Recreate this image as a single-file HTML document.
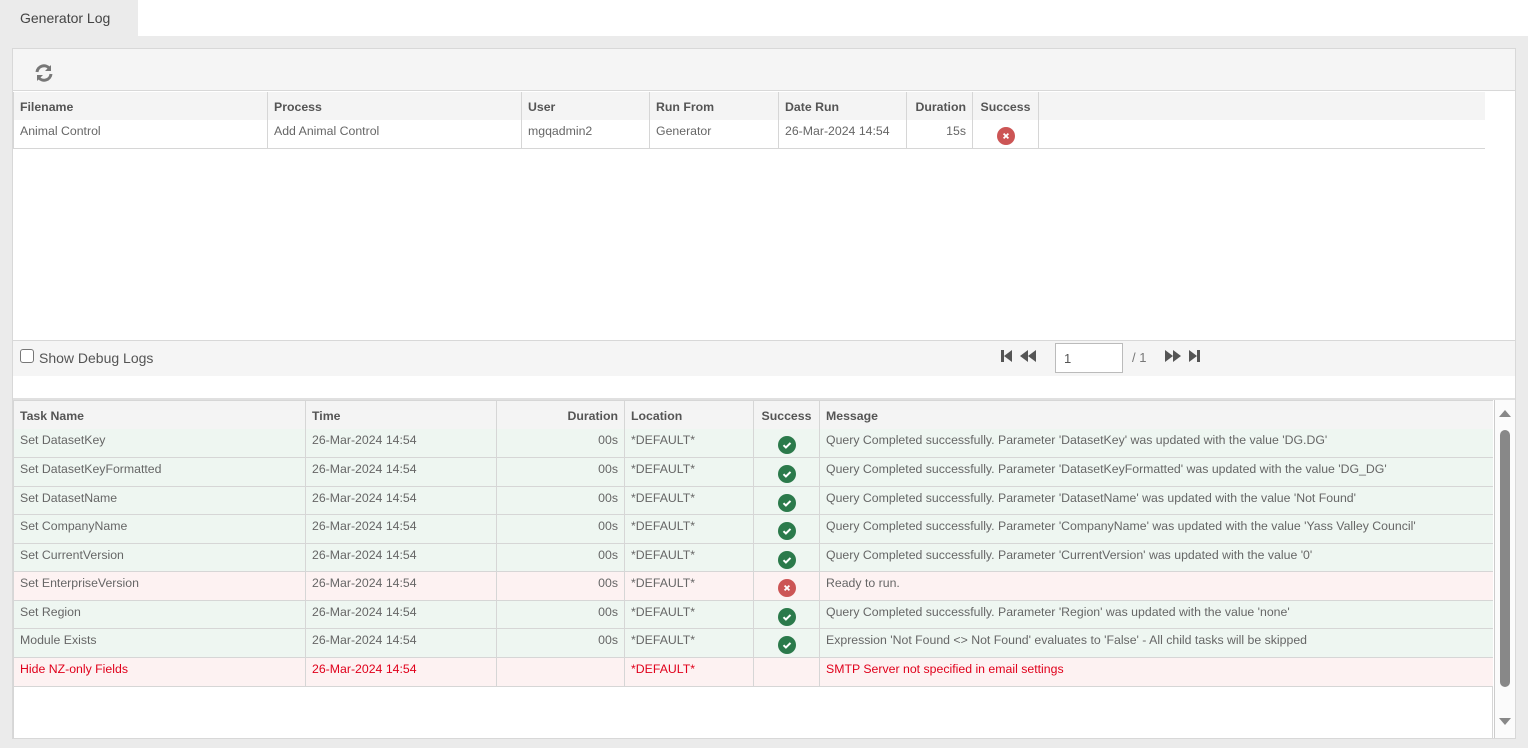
<!DOCTYPE html>
<html><head><meta charset="utf-8"><style>
*{box-sizing:border-box;margin:0;padding:0}
body{width:1528px;height:748px;background:#ebebeb;font-family:"Liberation Sans",sans-serif;font-size:12.3px;color:#666;position:relative;overflow:hidden}
.abs{position:absolute}
table{border-collapse:collapse;table-layout:fixed;position:absolute}
td,th{text-align:left;padding:0 6px;white-space:nowrap;overflow:hidden;border-left:1px solid #d6d6d6}
th{font-weight:bold;color:#555;background:#f4f4f4;height:28px;padding-top:2px}
td{border-top:1px solid #d6d6d6;padding-bottom:5px}
.g td{background:#eef6f1}
.r td{background:#fdf2f2}
.rr td{background:#fdf2f2;color:#e0001b}
.ok,.bad{display:inline-block;width:18px;height:18px;vertical-align:middle;position:relative;top:5px}
.num{text-align:right}
.c{text-align:center}
</style></head><body>
<svg width="0" height="0" style="position:absolute"><defs>
<symbol id="ok" viewBox="0 0 18 18"><circle cx="9" cy="9" r="9" fill="#2b7a4b"/><path d="M5.5 9.2l2.4 2.3 4.6-4.6" stroke="#fff" stroke-width="2" fill="none"/></symbol>
<symbol id="bad" viewBox="0 0 18 18"><circle cx="9" cy="9" r="9" fill="#cc5555"/><path d="M6.6 6.6l4.8 4.8M11.4 6.6l-4.8 4.8" stroke="#fff" stroke-width="1.8"/></symbol>
</defs></svg>
<div class="abs" style="left:138px;top:0;width:1390px;height:36px;background:#fff"></div>
<div class="abs" style="left:20px;top:10px;font-size:14px;color:#444">Generator Log</div>
<div class="abs" style="left:12px;top:48px;width:1504px;height:691px;background:#fff;border:1px solid #d8d8d8"></div>
<div class="abs" style="left:13px;top:49px;width:1502px;height:42px;background:#f5f5f5;border-bottom:1px solid #d8d8d8"></div>
<svg class="abs" style="left:34px;top:63px" width="20" height="20" viewBox="0 0 20 20"><path d="M3 9a7 7 0 0 1 12.5-3.5" stroke="#777" stroke-width="3" fill="none"/><path d="M17 2v6h-6z" fill="#777"/><path d="M17 11a7 7 0 0 1-12.5 3.5" stroke="#777" stroke-width="3" fill="none"/><path d="M3 18v-6h6z" fill="#777"/></svg>
<table style="left:13px;top:92px;width:1472px">
<colgroup><col style="width:254px"><col style="width:254px"><col style="width:128px"><col style="width:129px"><col style="width:128px"><col style="width:66px"><col style="width:66px"><col></colgroup>
<tr><th>Filename</th><th>Process</th><th>User</th><th>Run From</th><th>Date Run</th><th class="num">Duration</th><th class="c">Success</th><th></th></tr>
<tr style="height:28px;border-bottom:1px solid #d6d6d6"><td style="border-top:0">Animal Control</td><td style="border-top:0">Add Animal Control</td><td style="border-top:0">mgqadmin2</td><td style="border-top:0">Generator</td><td style="border-top:0">26-Mar-2024 14:54</td><td class="num" style="border-top:0">15s</td><td class="c" style="border-top:0"><svg class="bad"><use href="#bad"/></svg></td><td style="border-top:0"></td></tr>
</table>
<div class="abs" style="left:13px;top:340px;width:1502px;height:36px;background:#f5f5f5;border-top:1px solid #d8d8d8"></div>
<div class="abs" style="left:20px;top:349px;width:14px;height:14px;border:1px solid #777;border-radius:3px;background:#fff"></div>
<div class="abs" style="left:39px;top:350px;font-size:14px;color:#555">Show Debug Logs</div>
<svg class="abs" style="left:1000px;top:349px" width="42" height="14" viewBox="0 0 42 14"><rect x="1" y="1" width="3" height="12" fill="#555"/><path d="M4 7l8-6v12zM20 7l8-6v12zM28 7l8-6v12z" fill="#555"/></svg>
<div class="abs" style="left:1055px;top:343px;width:68px;height:30px;border:1px solid #bbb;background:#fff;padding:7px 8px;font-size:13px;color:#555">1</div>
<div class="abs" style="left:1132px;top:350px;font-size:13px;color:#777">/ 1</div>
<svg class="abs" style="left:1164px;top:349px" width="42" height="14" viewBox="0 0 42 14"><path d="M1 1l8 6-8 6zM9 1l8 6-8 6zM25 1l8 6-8 6z" fill="#555"/><rect x="33" y="1" width="3" height="12" fill="#555"/></svg>
<div class="abs" style="left:13px;top:398px;width:1502px;height:2px;background:#e0e0e0"></div>
<div class="abs" style="left:13px;top:400px;width:1480px;height:338px;border:1px solid #d6d6d6;border-bottom:0"></div>
<table style="left:13px;top:401px;width:1480px">
<colgroup><col style="width:292px"><col style="width:191px"><col style="width:128px"><col style="width:129px"><col style="width:66px"><col></colgroup>
<tr><th>Task Name</th><th>Time</th><th class="num">Duration</th><th>Location</th><th class="c">Success</th><th>Message</th></tr>
<tr class="g" style="height:28px"><td style="border-top:0">Set DatasetKey</td><td style="border-top:0">26-Mar-2024 14:54</td><td class="num" style="border-top:0">00s</td><td style="border-top:0">*DEFAULT*</td><td class="c" style="border-top:0"><svg class="ok"><use href="#ok"/></svg></td><td style="border-top:0">Query Completed successfully. Parameter 'DatasetKey' was updated with the value 'DG.DG'</td></tr>
<tr class="g" style="height:29px"><td>Set DatasetKeyFormatted</td><td>26-Mar-2024 14:54</td><td class="num">00s</td><td>*DEFAULT*</td><td class="c"><svg class="ok"><use href="#ok"/></svg></td><td>Query Completed successfully. Parameter 'DatasetKeyFormatted' was updated with the value 'DG_DG'</td></tr>
<tr class="g" style="height:28px"><td>Set DatasetName</td><td>26-Mar-2024 14:54</td><td class="num">00s</td><td>*DEFAULT*</td><td class="c"><svg class="ok"><use href="#ok"/></svg></td><td>Query Completed successfully. Parameter 'DatasetName' was updated with the value 'Not Found'</td></tr>
<tr class="g" style="height:29px"><td>Set CompanyName</td><td>26-Mar-2024 14:54</td><td class="num">00s</td><td>*DEFAULT*</td><td class="c"><svg class="ok"><use href="#ok"/></svg></td><td>Query Completed successfully. Parameter 'CompanyName' was updated with the value 'Yass Valley Council'</td></tr>
<tr class="g" style="height:28px"><td>Set CurrentVersion</td><td>26-Mar-2024 14:54</td><td class="num">00s</td><td>*DEFAULT*</td><td class="c"><svg class="ok"><use href="#ok"/></svg></td><td>Query Completed successfully. Parameter 'CurrentVersion' was updated with the value '0'</td></tr>
<tr class="r" style="height:29px"><td>Set EnterpriseVersion</td><td>26-Mar-2024 14:54</td><td class="num">00s</td><td>*DEFAULT*</td><td class="c"><svg class="bad"><use href="#bad"/></svg></td><td>Ready to run.</td></tr>
<tr class="g" style="height:28px"><td>Set Region</td><td>26-Mar-2024 14:54</td><td class="num">00s</td><td>*DEFAULT*</td><td class="c"><svg class="ok"><use href="#ok"/></svg></td><td>Query Completed successfully. Parameter 'Region' was updated with the value 'none'</td></tr>
<tr class="g" style="height:29px"><td>Module Exists</td><td>26-Mar-2024 14:54</td><td class="num">00s</td><td>*DEFAULT*</td><td class="c"><svg class="ok"><use href="#ok"/></svg></td><td>Expression 'Not Found &lt;&gt; Not Found' evaluates to 'False' - All child tasks will be skipped</td></tr>
<tr class="rr" style="height:29px;border-bottom:1px solid #d6d6d6"><td>Hide NZ-only Fields</td><td>26-Mar-2024 14:54</td><td></td><td>*DEFAULT*</td><td></td><td>SMTP Server not specified in email settings</td></tr>
</table>
<div class="abs" style="left:1494px;top:400px;width:21px;height:338px;background:#fbfbfb;border-left:1px solid #ccc"></div>
<div class="abs" style="left:1499px;top:410px;width:0;height:0;border-left:6px solid transparent;border-right:6px solid transparent;border-bottom:7px solid #888"></div>
<div class="abs" style="left:1500px;top:430px;width:10px;height:257px;background:#888;border-radius:5px"></div>
<div class="abs" style="left:1499px;top:718px;width:0;height:0;border-left:6px solid transparent;border-right:6px solid transparent;border-top:7px solid #888"></div>
</body></html>
